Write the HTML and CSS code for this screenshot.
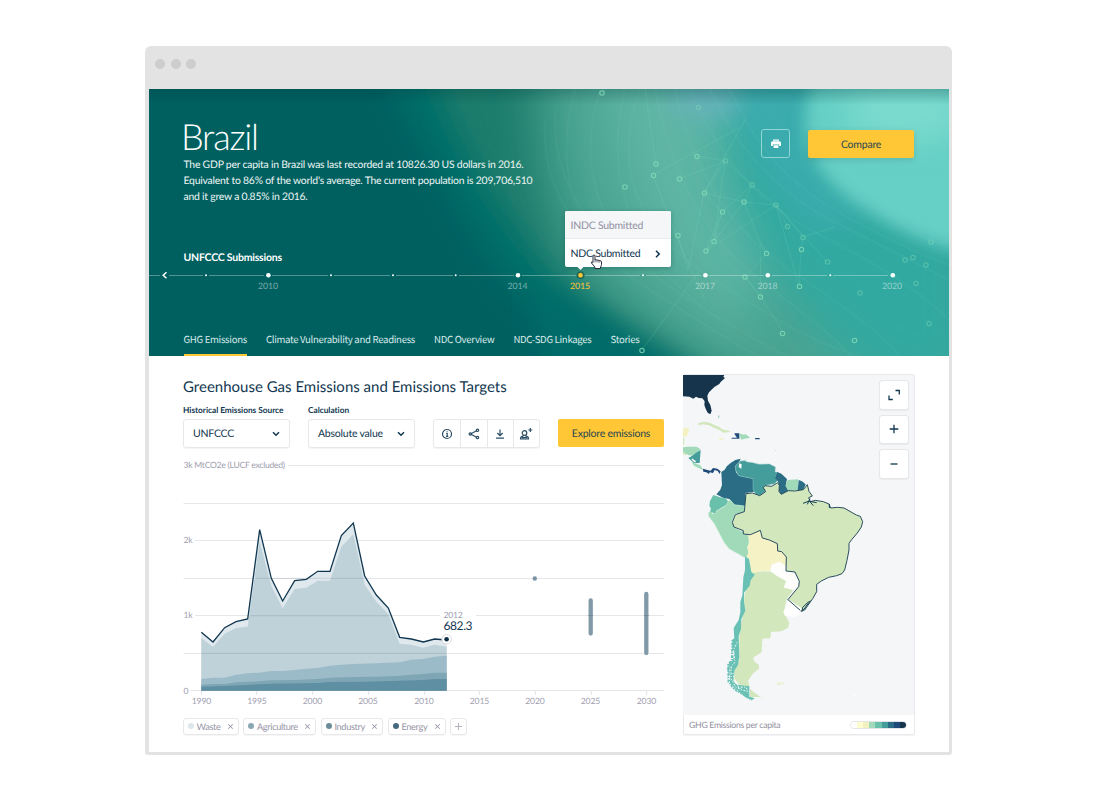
FILE: index.html
```html
<!DOCTYPE html>
<html lang="en">
<head>
<meta charset="utf-8">
<title>Brazil – GHG Emissions</title>
<link rel="stylesheet" href="styles.css">
</head>
<body>
<div class="window">
  <div class="titlebar"><i></i><i></i><i></i></div>
  <div class="page">
    <header class="hero">
      <svg class="hero-art" viewBox="149 89 800 267" preserveAspectRatio="none">
        <defs>
          <filter id="b40" x="-50%" y="-50%" width="200%" height="200%"><feGaussianBlur stdDeviation="24"/></filter>
          <filter id="b20" x="-50%" y="-50%" width="200%" height="200%"><feGaussianBlur stdDeviation="14"/></filter>
          <filter id="b8" x="-50%" y="-50%" width="200%" height="200%"><feGaussianBlur stdDeviation="8"/></filter>
          <linearGradient id="top" x1="0" y1="0" x2="0" y2="1"><stop offset="0" stop-color="#003c3c" stop-opacity=".28"/><stop offset="1" stop-color="#003c3c" stop-opacity="0"/></linearGradient>
        </defs>
        <rect x="149" y="89" width="800" height="267" fill="#006060"/>
        <path d="M380 60H980V400H660Q520 330 460 210Q410 130 380 60Z" fill="#006e69" filter="url(#b20)"/>
        <path d="M425 50H980V400H750Q590 330 525 240Q460 160 425 50Z" fill="#1b7d6c" filter="url(#b20)"/>
        <path d="M540 30H980V400H770Q630 340 580 270Q530 180 540 30Z" fill="#4ca492" filter="url(#b40)"/>
        <path d="M600 60H800V200L740 330Q620 240 600 60Z" fill="#5fb5a4" filter="url(#b40)"/>
        <path d="M725 60H980V390H880Q810 330 770 270Q710 190 725 60Z" fill="#30a9a0" filter="url(#b40)"/>
        <ellipse cx="708" cy="96" rx="42" ry="24" fill="#66b3ba" filter="url(#b20)"/>
        <path d="M735 70H830Q790 130 830 190L870 220L820 230Q750 180 735 70Z" fill="#3cacb2" opacity=".8" filter="url(#b20)"/>
        <path d="M540 285Q640 330 715 390H540Z" fill="#006c69" filter="url(#b20)"/>
        <path d="M818 70H990V258Q920 246 865 210Q776 155 818 70Z" fill="#66cfc6" filter="url(#b8)"/>
        <ellipse cx="905" cy="110" rx="60" ry="35" fill="#79dacd" filter="url(#b20)"/>
        <rect x="149" y="89" width="800" height="16" fill="url(#top)"/>
        <g class="waves">
          <path d="M690 89Q730 190 820 235T949 320M710 89Q750 180 840 225T949 280M730 89Q765 170 835 210T949 265M675 89Q700 210 790 270T900 356M655 89Q680 220 760 280T850 356M600 89Q560 220 690 300T800 356M575 89Q540 220 650 290T760 356M640 89Q600 200 700 270T860 356M625 89Q590 230 720 320M545 120Q540 210 620 260M555 110Q550 200 640 270M862 89Q815 145 875 200T949 240"/>
        </g>
        <g class="links">
          <path d="M645 89L656 164M602 93L606 89M653 175L739 128M679 179L725 161M697 156L725 161L704 193L744 202L776 205M704 193L722 212L706 251L714 241L725 161M706 251L776 205M752 185L744 202L760 242L767 253L745 277L761 297L760 242M776 205L803 237L801 249M752 185L776 205L788 227M704 193L688 270L678 236M653 175L680 245L705 300M783 332L761 297L745 277M700 270L642 350M722 212L714 241L744 202M801 249L799 286L776 205M752 185L722 212M725 161L752 185M776 205L827 262M835 227L803 237M704 193L745 120"/>
        </g>
        <g class="nodes">
          <circle cx="602" cy="93" r="2.2"/><circle cx="656" cy="164" r="2.2"/><circle cx="653.500" cy="175.500" r="2.2"/><circle cx="625" cy="187" r="2.2"/><circle cx="697" cy="156.500" r="2.2"/><circle cx="679.500" cy="179" r="2.2"/><circle cx="704.500" cy="193" r="2.2"/><circle cx="722.500" cy="212" r="2.2"/><circle cx="744" cy="202" r="2.2"/><circle cx="678" cy="235.500" r="2.2"/><circle cx="714" cy="241.500" r="2.2"/><circle cx="706" cy="251" r="2.2"/><circle cx="766.500" cy="253.500" r="2.2"/><circle cx="745" cy="277" r="2.2"/><circle cx="760.500" cy="297" r="2.2"/><circle cx="799.500" cy="286.500" r="2.2"/><circle cx="782.500" cy="333.500" r="2.2"/><circle cx="854.500" cy="340.500" r="2.2"/><circle cx="642" cy="350.500" r="2.2"/><circle cx="801.500" cy="249.500" r="2.2"/>
          <g opacity=".55"><circle cx="698.500" cy="107.500" r="2.200"/><circle cx="725.500" cy="161" r="2.2"/><circle cx="752" cy="185" r="2.2"/><circle cx="776" cy="205" r="2.2"/><circle cx="787.500" cy="226.500" r="2.2"/><circle cx="803" cy="237.500" r="2.2"/><circle cx="827.500" cy="262" r="2.2"/><circle cx="860" cy="293" r="2.2"/><circle cx="905" cy="260" r="2.2"/><circle cx="913" cy="257.500" r="2.2"/><circle cx="926" cy="265" r="2.2"/><circle cx="931" cy="242" r="2.2"/><circle cx="916" cy="283.500" r="2.2"/><circle cx="929" cy="323.500" r="2.2"/></g>
        </g>
      </svg>

      <div class="hero-head">
        <div class="intro">
          <h1>Brazil</h1>
          <p>The GDP per capita in Brazil was last recorded at 10826.30 US dollars in 2016.<br>Equivalent to 86% of the world's average. The current population is 209,706,510<br>and it grew a 0.85% in 2016.</p>
        </div>
        <div class="hero-actions">
          <button class="print" aria-label="Print"><svg width="12" height="12" viewBox="0 0 12 12"><path d="M3 1.500h6v1.200H3zM2.500 3.300h7Q11 3.300 11 5v3H9.200V6.500H2.800V8H1V5Q1 3.300 2.500 3.300ZM3.600 7.200h4.800V10H3.600z" fill="#fff"/></svg></button>
          <button class="primary">Compare</button>
        </div>
      </div>

      <section class="submissions">
        <h2>UNFCCC Submissions</h2>
        <svg class="timeline" width="800" height="34" viewBox="149 265 800 34">
          <path class="rail" d="M149 275.500h11M169 275.500h34M209 275.500h55M272 275.500h56M334 275.500h56M396 275.500h57M459 275.500h55M522 275.500h54M585 275.500h55M646 275.500h55M709 275.500h55M772 275.500h55M833 275.500h55"/>
          <path d="M166.500 272.300L163.200 275.300L166.500 278.300" fill="none" stroke="#fff" stroke-width="1.500"/>
          <g fill="#fff"><circle cx="206" cy="275.200" r="1"/><circle cx="268.400" cy="275.200" r="2.300"/><circle cx="331" cy="275.200" r="1"/><circle cx="393" cy="275.200" r="1"/><circle cx="455.700" cy="275.200" r="1"/><circle cx="518" cy="275.200" r="2.300"/><circle cx="643" cy="275.200" r="1"/><circle cx="705.400" cy="275.200" r="2.300"/><circle cx="767.800" cy="275.200" r="2.300"/><circle cx="830.300" cy="275.200" r="1"/><circle cx="892.800" cy="275.200" r="2.300"/></g>
          <circle cx="580.500" cy="275.200" r="3" fill="#ffc837" stroke="#00504f" stroke-opacity=".7" stroke-width="1.600"/>
          <g class="years"><text x="268" y="289">2010</text><text x="517.500" y="289">2014</text><text x="580" y="289" class="on">2015</text><text x="705" y="289">2017</text><text x="767.500" y="289">2018</text><text x="892" y="289">2020</text></g>
        </svg>
        <div class="popover">
          <div class="muted">INDC Submitted</div>
          <div>NDC Submitted<svg width="6" height="8" viewBox="0 0 6 8"><path d="M1 .8L4.200 4L1 7.200" fill="none" stroke="#113750" stroke-width="1.500"/></svg></div>
          <svg class="cursor" width="13" height="16" viewBox="0 0 13 16"><path d="M3 2Q3 1 4 1T5 2V6Q6 5.200 7 6.200Q8 5.600 9 6.600Q11.500 6.200 11.500 8V10.500Q11.500 12 10.500 13V14.500H4.800V13L1.500 9Q1 7.700 2.200 7.900L3 8.600Z" fill="#fff" stroke="#2b2c3b" stroke-width="1"/><path d="M5 6v2.500M7 6.500v2M9 7v1.800" stroke="#2b2c3b" stroke-width=".7"/></svg>
        </div>
      </section>

      <nav class="tabs"><a class="on">GHG Emissions</a><a>Climate Vulnerability and Readiness</a><a>NDC Overview</a><a>NDC-SDG Linkages</a><a>Stories</a></nav>
    </header>

    <main class="content">
      <section class="emissions">
        <h2>Greenhouse Gas Emissions and Emissions Targets</h2>
        <div class="controls">
          <label>Historical Emissions Source<span class="select">UNFCCC<svg width="8" height="6" viewBox="0 0 8 6"><path d="M1 1.200L4 4.200L7 1.200" fill="none" stroke="#113750" stroke-width="1.500"/></svg></span></label>
          <label>Calculation<span class="select">Absolute value<svg width="8" height="6" viewBox="0 0 8 6"><path d="M1 1.200L4 4.200L7 1.200" fill="none" stroke="#113750" stroke-width="1.500"/></svg></span></label>
          <div class="tools">
            <span><svg width="12" height="12" viewBox="0 0 12 12"><circle cx="6" cy="6" r="4.500"/><path d="M5.200 5.400H6.200V8.300M5 8.300h2.300M5.700 3.500h.8"/></svg></span>
            <span><svg width="12" height="12" viewBox="0 0 12 12"><path d="M2.500 6L9 2.500M2.500 6L9 9.500"/><circle cx="2.300" cy="6" r="1.200"/><circle cx="9.500" cy="2.300" r="1.200"/><circle cx="9.500" cy="9.500" r="1.200"/></svg></span>
            <span><svg width="12" height="12" viewBox="0 0 12 12"><path d="M6 1.500V7.500M3.300 5L6 7.700L8.700 5M2 10.200h8"/></svg></span>
            <span><svg width="14" height="14" viewBox="0 0 14 14"><circle cx="5.500" cy="6" r="2.300"/><path d="M4.300 8L4 9.200Q1.500 9.600 1.500 12H9.500Q9.500 9.600 7 9.200L6.700 8M3 10.700h5M11.300 1v4M9.300 3h4"/></svg></span>
          </div>
          <button class="primary">Explore emissions</button>
        </div>

        <svg class="chart" width="482" height="250" viewBox="183 458 482 250">
          <path class="grid" d="M288 465.500H664M183.500 503.500H664M195 540.500H664M183.500 578.500H664M195 615.500H440M476 615.500H664M183.500 653.500H664M191 690.500H664M201.500 691v4M256.500 691v4M312.500 691v4M368.500 691v4M424.500 691v4M479.500 691v4M535.500 691v4M591.500 691v4M646.500 691v4"/>
          <g transform="translate(175 480) scale(.333333)">
            <path d="M79 457L114 486L149 443L183 425L218 417L254 149L289 295L323 363L359 302L394 298L428 274H465L499 167L535 129L569 288L604 345L640 384L674 472L709 477L745 486L779 477L815 480V632H79Z" fill="#dfe9ed"/>
            <path d="M79 474L114 501L149 461L183 444L218 440L254 185L289 318L323 385L359 327L394 323L428 302H465L499 200L535 163L569 314L604 365L640 403L674 491L709 494L745 503L779 494L815 500V632H79Z" fill="#bfd1d9"/>
            <path d="M79 597L114 593H149L183 584L218 580L254 578L289 573H323L359 570L394 566L428 564L465 557L499 554L535 552L604 550L674 547L709 539L745 537L779 530L815 527V632H79Z" fill="#9cbbc8"/>
            <path d="M79 614L114 612H149L183 607L254 604L289 601L359 600L428 597L465 593L535 591L604 590L674 587L709 584L745 582L779 578H815V632H79Z" fill="#7fa6b5"/>
            <path d="M79 620L149 618L254 613L289 611L428 609L465 606L569 605L674 602L745 600L779 597H815V632H79Z" fill="#5f8fa3"/>
            <path d="M226 407H648M242 295H571M79 520H815" stroke="#18324a" stroke-opacity=".13" stroke-width="3"/>
            <path d="M79 457L114 486L149 443L183 425L218 417L254 149L289 295L323 363L359 302L394 298L428 274H465L499 167L535 129L569 288L604 345L640 384L674 472L709 477L745 486L779 477L815 480" fill="none" stroke="#113750" stroke-width="3.900"/>
          </g>
          <circle cx="446.600" cy="639.200" r="4.700" fill="#fff" stroke="#ddd9e2"/><circle cx="446.600" cy="639.200" r="2.300" fill="#0b2f48"/>
          <circle cx="534.800" cy="578.500" r="2.200" fill="#7b94a4"/>
          <path d="M590.700 600.500V633.500M646.300 594V653" stroke="#8299a8" stroke-width="4.300" stroke-linecap="round"/>
          <path d="M588.500 615.500h4.500M644 615.500h4.500" stroke="#718799"/>
          <g class="labels"><text x="183.500" y="468">3k MtCO2e (LUCF excluded)</text><text x="183.500" y="543">2k</text><text x="183.500" y="618">1k</text><text x="183.500" y="694">0</text><text x="443.500" y="618">2012</text></g>
          <text class="value" x="443.500" y="630">682.3</text>
          <g class="labels mid"><text x="201.500" y="704">1990</text><text x="257" y="704">1995</text><text x="312.500" y="704">2000</text><text x="368" y="704">2005</text><text x="424" y="704">2010</text><text x="479.500" y="704">2015</text><text x="535" y="704">2020</text><text x="590.500" y="704">2025</text><text x="646.500" y="704">2030</text></g>
        </svg>

        <div class="tags">
          <span class="tag waste"><i></i>Waste<b></b></span><span class="tag agri"><i></i>Agriculture<b></b></span><span class="tag industry"><i></i>Industry<b></b></span><span class="tag energy"><i></i>Energy<b></b></span><span class="tag add"><b></b></span>
        </div>
      </section>

      <aside class="map-card">
        <svg class="map" width="231" height="340" viewBox="683 375 231 340">
          <g transform="translate(680 370) scale(.333333)">
            <path fill="#16344c" d="M9 13H134L130 21L135 24L122 36L118 42L103 51L87 67L82 77L84 92L91 105L95 122L91 133L83 128L77 116L73 105L74 94L67 85L56 84L48 80L40 86L28 80L9 79Z"/>
            <path fill="#d2e8bc" d="M54 160L72 155L89 158L101 164L116 170L130 179L147 182L150 186L130 188L120 181L102 173L87 166L69 163L56 166Z"/>
            <path fill="#f4f2c3" d="M9 174L27 173L25 187L21 198L9 202ZM116 205L131 205L130 209H118Z"/>
            <path fill="#d2e8bc" d="M9 204H13L12 225H9ZM9 246L20 251L18 256L9 253Z"/>
            <path fill="#1f4a79" d="M163 190H178V206H154L156 203H171L165 194ZM225 204H239V208H226Z"/>
            <path fill="#a0dab8" d="M178 190L190 194L197 193L211 203L194 206L183 209ZM9 232L26 230L50 230L62 238L49 248L37 257L25 255L9 246Z"/>
            <path fill="#a0dab8" d="M35 276L49 281L61 286L70 300L63 298L55 293L42 287Z"/>
            <path fill="#449d9a" d="M62 240L59 279L42 279L25 264L37 257L48 248Z"/>
            <path fill="#1f4a79" d="M69 296L82 300L92 302L99 294L112 296L122 304L119 312L113 303L104 300L99 309L89 307L87 312L79 307L70 305Z"/>
            <path fill="#fff" d="M36 265l12 9-3 4-10-9z"/>
            <path fill="#a0dab8" d="M114 138l4-3v10l-4-2zM194 270l3-3 1 4zM285 240l3 0-1 4z"/>
            <path fill="none" stroke="#fff" stroke-width="2" stroke-dasharray="3 7" d="M122 140L145 163L160 180L176 186M241 209L270 215L282 228L286 252L283 274"/>
          </g>
          <g transform="translate(680 450) scale(.333333)" stroke-linejoin="round">
            <path fill="#2a6d85" d="M182 26L166 30L153 38L141 48L134 59L124 66L126 105L121 119L109 133L129 143L148 147L163 164L193 168L200 166L202 145L196 138L197 129L222 125L220 86L177 77L168 67L166 48L177 37Z"/>
            <path fill="#449d9a" stroke="#8cc4c4" stroke-width="1.500" d="M182 33L194 32L202 36L218 38L237 43L268 42L286 51L285 66L293 67L286 81L293 91L284 101L255 106L252 117L258 122L240 137L227 132L219 119V86L176 77L167 61L166 48Z"/>
            <path fill="#fff" d="M178 40L185 43L184 56L176 51Z"/>
            <path fill="#2a6d85" d="M292 66L304 71L321 87L318 101L325 123L304 134L294 118L295 96L285 83Z"/>
            <path fill="#a0dab8" d="M323 90L354 88V120L325 123L316 107Z"/>
            <path fill="#2a6d85" d="M356 90L366 94L377 103L370 119L353 123Z"/>
            <path fill="#a0dab8" stroke="#d0eedd" stroke-width="1.500" d="M144 154L150 149L163 164L193 168L194 185L165 193L155 216L166 234L178 241L190 245V253L206 255L207 279L202 292L208 310L203 321L198 325L147 296L132 277L103 221L86 199V187L98 182L97 192L108 189L111 182L136 168Z"/>
            <path fill="#69c1ab" d="M100 135L120 142L137 145L144 154L137 166L109 182L106 191L90 184L93 176L88 167L90 153Z"/>
            <path fill="#f5f3c6" d="M204 254L220 248L239 241L247 264L275 273L291 280L295 304L310 308L320 320V338L317 350L299 336L275 343L270 363L246 362L218 370L211 364L207 329L200 318L205 308L202 292L208 276Z"/>
            <path fill="#fdfefb" d="M272 360L275 344L299 335L317 348L318 364L337 366L342 382L351 384L356 403L340 420L310 412L318 394L292 378L278 373Z"/>
            <path fill="#d2e8bc" stroke="#294c5d" stroke-width="3" d="M293 98L298 106L297 125L304 133L325 122L345 123L370 119L382 104L387 124L397 138L386 143L391 155L406 151L430 155L447 162L452 174L473 172L492 174L529 195L541 199L548 215L544 231L532 249L515 269L507 280V300L501 331L494 360L486 371L470 377L446 382L424 393L410 403V425L398 446L374 480L361 484L323 450L356 410L358 394L345 366L318 363L319 321L305 305L293 303L292 281L268 270L247 264L241 241L211 254L190 252V242L162 231L157 217L166 194L193 185L198 131L217 129L239 137L257 125L250 113L255 107L275 109L290 100Z"/>
            <path fill="none" stroke="#163e55" stroke-width="3" d="M369 160L388 153L400 167M382 163L390 146M388 154L410 158M448 162V174M370 480L391 452M366 485L368 472L386 455"/>
          </g>
          <g transform="translate(680 560) scale(.333333)">
            <path fill="#d2e8bc" d="M217 38L250 34L273 35L292 49L318 63L311 83L340 90L320 118L311 157L328 188L324 204L303 214L273 216L271 235L247 236L245 276L232 285L220 292L222 304L237 315V326L218 341L204 363L209 381L180 376L162 355L165 325L178 301L178 225L190 157L194 101L210 65Z"/>
            <path fill="#fff" d="M324 118L365 145L359 164L342 171L315 167L310 157L319 140Z"/>
            <path fill="none" stroke="#294c5d" stroke-width="3" d="M324 119L361 151"/>
            <path fill="#69c1b5" d="M195 -10L207 -4L214 36L224 44L212 61L209 77L192 98V127L196 152L184 177L183 207L176 228L178 290L174 315L164 330L160 364L171 374L208 379V410L224 415L216 420L197 412L181 400L168 393L147 367L151 352L142 330L149 306L159 302L163 279L157 266V239L163 235L161 204L176 180L181 157V126L187 106L190 52L195 31Z"/>
            <path fill="none" stroke="#69c1b5" stroke-width="7" stroke-dasharray="4 4 8 3" d="M158 240L156 300L145 315L146 365L163 387L216 419"/>
            <path fill="none" stroke="#f3f8f7" stroke-width="3" stroke-dasharray="3 5 6 4" d="M171 247L161 270L165 307L154 317L153 357L168 382L202 395M174 382L198 381L206 400M167 370L185 391M159 339L165 365M150 320L148 370L190 408"/>
            <path fill="#d2e8bc" d="M210 387L226 400L242 411H210Z"/>
            <path fill="#ecf1d4" d="M289 372l9-6 17 3-4 6-8-3-7 5zM252 257l7-2-4 7zM242 411l15 2-15 0z"/>
            <path fill="#fff" d="M514 402l13 2 10 8-15-7z"/>
          </g>
        </svg>
        <div class="map-buttons">
          <button aria-label="Expand"><svg width="14" height="14" viewBox="0 0 14 14"><path d="M8.500 2.500h3.800v4M2 7.500v4h3.800"/></svg></button>
          <button aria-label="Zoom in"><svg width="14" height="14" viewBox="0 0 14 14"><path d="M7 2.700v8.600M2.700 7h8.600"/></svg></button>
          <button aria-label="Zoom out"><svg width="14" height="14" viewBox="0 0 14 14"><path d="M3.500 7h7"/></svg></button>
        </div>
        <div class="map-foot">GHG Emissions per capita<span class="scale"><i></i><i></i><i></i><i></i><i></i><i></i><i></i><i></i><i></i></span></div>
      </aside>
    </main>
  </div>
</div>
</body>
</html>
```
FILE: styles.css
```css
* { box-sizing: border-box; }
body { margin: 0; background: #fff; font-family: Lato, "Liberation Sans", sans-serif; color: #113750; text-rendering: geometricPrecision; }
h1, h2, p { margin: 0; font-weight: 400; }
button { font: inherit; color: inherit; border: 0; padding: 0; text-rendering: inherit; }
svg { display: block; }
.window { width: 807px; height: 709px; margin: 46px 0 0 145px; padding: 0 3px 3px 4px; background: #e3e3e3; border-radius: 6px 6px 3px 3px; }
.titlebar { height: 43px; display: flex; gap: 5.500px; padding: 13px 0 0 6px; }
.titlebar i { width: 10px; height: 10px; border-radius: 50%; background: #cdcdcd; }
.page { height: 663px; background: #fff; }

.hero { position: relative; height: 267px; color: #fff; overflow: hidden; display: flex; flex-direction: column; }
.hero-art { position: absolute; inset: 0; width: 800px; height: 267px; }
.hero-art .waves { fill: none; stroke: #9be6d2; stroke-opacity: .05; stroke-width: 2; }
.hero-art .links { fill: none; stroke: #8ee3c0; stroke-opacity: .2; stroke-width: .8; }
.hero-art .nodes { fill: none; stroke: #83dbb6; stroke-opacity: .85; stroke-width: 1.100; }
.hero-head { position: relative; height: 154px; padding: 26px 35px 0 34.500px; display: flex; justify-content: space-between; }
.intro h1 { font-size: 36px; line-height: 43px; height: 41px; font-weight: 300; margin-left: -2.500px; letter-spacing: -1.200px; }
.intro p { font-size: 10.400px; line-height: 16.200px; letter-spacing: -.220px; white-space: nowrap; color: #edf5f4; padding-top: 1px; }
.hero-actions { display: flex; gap: 18px; padding-top: 14px; }
.print { width: 29px; height: 29px; border: 1px solid #8fd6d5; border-radius: 3px; background: none; display: flex; align-items: center; justify-content: center; }
.primary { width: 106px; height: 28px; border-radius: 2px; background: #ffc735; color: #284652; font-size: 10.500px; letter-spacing: -.220px; padding-top: 1px; box-shadow: 0 2px 6px rgba(20,60,60,.15); }
.hero-actions .primary { margin-top: 1px; }

.submissions { position: relative; height: 83px; }
.submissions h2 { font-size: 10.500px; line-height: 14px; height: 22px; font-weight: 700; letter-spacing: -.220px; padding: 8px 0 0 34.500px; }
.timeline { position: relative; }
.rail { stroke: #fff; stroke-opacity: .32; stroke-width: 1; }
.years { font-size: 8.800px; fill: #fff; fill-opacity: .48; text-anchor: middle; letter-spacing: -.1px; }
.years .on { fill: #ffc837; fill-opacity: 1; }
.popover { position: absolute; left: 415.500px; top: -32px; width: 106px; height: 56px; border-radius: 2px; background: #fff; color: #113750; font-size: 10.500px; letter-spacing: -.250px; box-shadow: 0 1px 5px rgba(0,50,50,.3); }
.popover::after { content: ""; position: absolute; left: 13px; bottom: -2px; width: 5px; height: 5px; background: #fff; transform: rotate(45deg); }
.popover > div { height: 28px; display: flex; align-items: center; justify-content: space-between; padding: 2px 10px 0 6px; }
.popover .muted { background: #f4f6f8; color: #9391a2; border-radius: 2px 2px 0 0; border-bottom: 1px solid #e9ebee; padding-top: 2px; }
.popover .cursor { position: absolute; left: 25px; top: 43px; z-index: 1; }

.tabs { position: relative; height: 30px; display: flex; gap: 19px; padding-left: 34.500px; font-family: "Noto Sans CJK SC", "Noto Sans", sans-serif; font-size: 9.600px; letter-spacing: -.3px; line-height: 27px; white-space: nowrap; color: #d8ebea; }
.tabs .on { border-bottom: 2px solid #ffc837; }

.content { display: flex; justify-content: space-between; padding: 18px 34px 0 34px; }
.emissions { width: 482px; }
.emissions h2 { font-size: 15px; line-height: 26px; height: 24px; }
.controls { display: flex; align-items: flex-end; width: 481px; height: 50px; }
.controls label { font-size: 8.300px; line-height: 10px; font-weight: 700; width: 107px; margin-right: 18px; white-space: nowrap; letter-spacing: -.02px; }
.select { display: flex; align-items: center; justify-content: space-between; width: 107px; height: 29px; margin-top: 4.500px; padding: 0 9px; border: 1px solid #e8e8eb; border-radius: 3px; font-weight: 400; font-size: 10.500px; letter-spacing: -.220px; box-shadow: 0 1px 1px rgba(0,0,0,.05); }
.tools { display: grid; grid-template-columns: repeat(4, 1fr); width: 107px; height: 29px; border: 1px solid #e8e8eb; border-radius: 3px; box-shadow: 0 1px 1px rgba(0,0,0,.05); }
.tools span { display: flex; align-items: center; justify-content: center; border-left: 1px solid #e8e8eb; }
.tools span:first-child { border: 0; }
.tools svg { fill: none; stroke: #2c4e66; stroke-width: 1.200; }
.controls .primary { margin-left: auto; margin-bottom: 1px; box-shadow: none; }
.chart { margin-top: 10px; }
.emissions .grid { stroke: #e5e6ea; stroke-width: 1.200; fill: none; }
.labels { font-size: 8.600px; fill: #a09eaf; letter-spacing: -.270px; }
.mid { text-anchor: middle; letter-spacing: -.1px; }
.value { font-size: 12px; fill: #113750; letter-spacing: -.4px; }
.tags { display: flex; gap: 4.500px; margin-top: 9.500px; }
.tag { height: 17px; display: flex; align-items: center; border: 1px solid #e8e8eb; border-radius: 3px; padding: 0 4px; font-size: 9.200px; letter-spacing: -.340px; color: #9694a5; box-shadow: 0 1px 1px rgba(0,0,0,.04); }
.tag i { width: 6px; height: 6px; border-radius: 50%; margin-right: 2.500px; background: #dde6ea; }
.tag.agri i { background: #8aa7b4; }
.tag.industry i { background: #6d8c9b; }
.tag.energy i { background: #456a80; }
.tag b { width: 7px; height: 7px; margin-left: 6.500px; background: linear-gradient(#9694a5,#9694a5) center/7px 1px no-repeat, linear-gradient(#9694a5,#9694a5) center/1px 7px no-repeat; transform: rotate(45deg) scale(.9); }
.tag.add b { margin: 0; transform: none; opacity: .7; }

.map-card { position: relative; width: 232px; height: 361px; border: 1px solid #e8e9ec; border-radius: 2px; box-shadow: 0 1px 1px rgba(0,0,0,.05); margin-left: -1px; }
.map { background: #f4f6f8; width: 231px; height: 340px; margin-left: -1px; }
.map-buttons { position: absolute; top: 5px; right: 5px; display: grid; gap: 5px; }
.map-buttons button { width: 30px; height: 29.500px; background: #fff; border: 1px solid #e6e7ea; border-radius: 3px; display: flex; align-items: center; justify-content: center; box-shadow: 0 1px 1px rgba(0,0,0,.05); }
.map-buttons svg { fill: none; stroke: #113750; stroke-width: 1.300; }
.map-foot { height: 19px; display: flex; align-items: center; justify-content: space-between; padding: 0 7px 0 5px; font-size: 8.700px; letter-spacing: -.3px; color: #9391a2; }
.scale { display: flex; width: 57px; height: 8px; border: 1px solid #e2e4e8; border-radius: 4px; overflow: hidden; }
.scale i { flex: 1; background: #fff; }
.scale i:nth-child(2) { background: #fefdd0; }
.scale i:nth-child(3) { background: #f1f0bf; }
.scale i:nth-child(4) { background: #a0dab8; }
.scale i:nth-child(5) { background: #69c1ab; }
.scale i:nth-child(6) { background: #449d9a; }
.scale i:nth-child(7) { background: #2a6d85; }
.scale i:nth-child(8) { background: #1f4a79; }
.scale i:nth-child(9) { background: #16344c; }
```
